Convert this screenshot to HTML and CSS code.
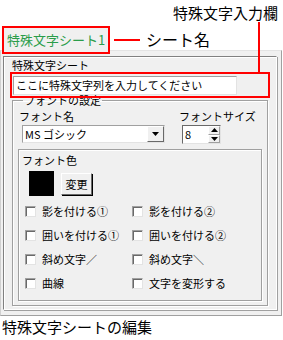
FILE: index.html
```html
<!DOCTYPE html>
<html lang="ja">

<head>
    <meta charset="UTF-8">
    <meta name="viewport" content="width=device-width, initial-scale=1.0">
    <title>特殊文字シートの編集</title>
    <link rel="stylesheet" href="styles.css">
</head>

<body>
    <div class="note-top">特殊文字入力欄</div>

    <div class="tab-row">
        <div class="tab">特殊文字シート1</div>
        <div class="note-line"></div>
        <div class="note-name">シート名</div>
    </div>

    <div class="panel">
        <div class="page">
            <div class="page-title">特殊文字シート</div>

            <div class="text-wrap">
                <div class="note-drop"></div>
                <div class="text-field">ここに特殊文字列を入力してください</div>
            </div>

            <fieldset class="font-group">
                <legend>フォントの設定</legend>

                <div class="font-labels">
                    <span class="lbl-name">フォント名</span>
                    <span>フォントサイズ</span>
                </div>

                <div class="font-controls">
                    <div class="combo">
                        <span class="combo-text">MS ゴシック</span>
                        <span class="combo-btn">
                            <svg width="7" height="4" viewBox="0 0 7 4"><path d="M0 0H7L3.5 4Z" fill="#000"/></svg>
                        </span>
                    </div>
                    <div class="spin">
                        <span class="spin-text">8</span>
                        <span class="spin-btns">
                            <span class="spin-up"><svg width="7" height="4" viewBox="0 0 7 4"><path d="M0 4H7L3.5 0Z" fill="#000"/></svg></span>
                            <span class="spin-down"><svg width="7" height="4" viewBox="0 0 7 4"><path d="M0 0H7L3.5 4Z" fill="#000"/></svg></span>
                        </span>
                    </div>
                </div>

                <div class="color-box">
                    <div class="color-title">フォント色</div>
                    <div class="color-row">
                        <div class="swatch"></div>
                        <div class="btn">変更</div>
                    </div>

                    <div class="checks">
                        <div class="check"><span class="box"></span>影を付ける①</div>
                        <div class="check"><span class="box"></span>影を付ける②</div>
                        <div class="check"><span class="box"></span>囲いを付ける①</div>
                        <div class="check"><span class="box"></span>囲いを付ける②</div>
                        <div class="check"><span class="box"></span>斜め文字／</div>
                        <div class="check"><span class="box"></span>斜め文字＼</div>
                        <div class="check"><span class="box"></span>曲線</div>
                        <div class="check"><span class="box"></span>文字を変形する</div>
                    </div>
                </div>
            </fieldset>
        </div>
    </div>

    <div class="caption">特殊文字シートの編集</div>
</body>

</html>
```

FILE: styles.css
```css
body {
    margin: 0;
    width: 283px;
    background-color: #fff;
    font-family: "Noto Sans CJK JP", sans-serif;
    color: #000;
}

.note-top {
    height: 26px;
    line-height: 26px;
    font-size: 15px;
    text-align: right;
    padding-right: 5px;
    box-sizing: border-box;
}

.tab-row {
    display: flex;
    align-items: flex-start;
    height: 24px;
}

.tab {
    position: relative;
    z-index: 1;
    margin-left: 2px;
    width: 108px;
    height: 28px;
    box-sizing: border-box;
    border: 2px solid #f00;
    background-color: #f0f0f0;
    color: #2a9d4a;
    font-size: 13px;
    line-height: 24px;
    padding-left: 3px;
    white-space: nowrap;
    overflow: hidden;
}

.note-line {
    margin-left: 4px;
    margin-top: 13px;
    width: 26px;
    height: 2px;
    background-color: #f00;
}

.note-name {
    margin-left: 6px;
    margin-top: 3px;
    font-size: 16px;
    line-height: 20px;
}

.panel {
    width: 282px;
    height: 266px;
    box-sizing: border-box;
    background-color: #f0f0f0;
    border-top: 1px solid #e3e3e3;
    border-right: 1px solid #a0a0a0;
    border-bottom: 1px solid #a0a0a0;
    border-left: 1px solid #d0d0d0;
    padding: 5px 4px 5px 2px;
}

.page {
    height: 100%;
    box-sizing: border-box;
    border: 1px solid;
    border-color: #808080 #fff #fff #808080;
    box-shadow: 1px 1px 0 #a0a0a0, inset 1px 1px 0 #fff;
}

.page-title {
    font-size: 11px;
    line-height: 14px;
    padding-left: 8px;
    margin-top: 1px;
}

.text-wrap {
    position: relative;
    z-index: 1;
    margin-left: 6px;
    width: 260px;
    height: 26px;
    box-sizing: border-box;
    border: 2px solid #f00;
    padding: 2px 1px;
}

.note-drop {
    position: absolute;
    left: 246px;
    top: -52px;
    width: 2px;
    height: 50px;
    background-color: #f00;
}

.text-field {
    width: 224px;
    height: 19px;
    box-sizing: border-box;
    background-color: #fff;
    border: 1px solid;
    border-color: #a0a0a0 #e3e3e3 #e3e3e3 #a0a0a0;
    font-size: 11px;
    line-height: 17px;
    padding-left: 2px;
    white-space: nowrap;
}

.font-group {
    margin: -4px 0 0 8px;
    width: 256px;
    height: 212px;
    box-sizing: border-box;
    border: 1px solid #a0a0a0;
    box-shadow: 1px 1px 0 #fff, inset 1px 1px 0 #fff;
    padding: 0 4px 0 6px;
}

.font-group legend {
    font-size: 11px;
    line-height: 12px;
    padding: 0 1px;
    margin-left: 4px;
}

.font-labels {
    display: flex;
    font-size: 11px;
    line-height: 13px;
    margin-top: 4px;
}

.lbl-name {
    width: 160px;
}

.font-controls {
    display: flex;
    align-items: flex-start;
    margin-top: 2px;
}

.combo {
    display: flex;
    margin-left: 3px;
    width: 143px;
    height: 18px;
    box-sizing: border-box;
    background-color: #fff;
    border: 1px solid;
    border-color: #a0a0a0 #e3e3e3 #e3e3e3 #a0a0a0;
}

.combo-text {
    flex: 1;
    font-size: 11px;
    line-height: 16px;
    padding-left: 2px;
}

.combo-btn {
    display: flex;
    align-items: center;
    justify-content: center;
    width: 15px;
    background-color: #f0f0f0;
    border: 1px solid;
    border-color: #fff #696969 #696969 #fff;
}

.spin {
    display: flex;
    margin-left: 17px;
    width: 39px;
    height: 19px;
    box-sizing: border-box;
    background-color: #fff;
    border: 1px solid;
    border-color: #696969 #e3e3e3 #e3e3e3 #696969;
}

.spin-text {
    flex: 1;
    font-size: 11px;
    line-height: 16px;
    padding-left: 2px;
}

.spin-btns {
    display: flex;
    flex-direction: column;
    width: 12px;
}

.spin-up,
.spin-down {
    flex: 1;
    display: flex;
    align-items: center;
    justify-content: center;
    background-color: #f0f0f0;
    border: 1px solid;
    border-color: #fff #a0a0a0 #a0a0a0 #fff;
}

.color-box {
    margin: 5px 0 0 -1px;
    width: 244px;
    height: 152px;
    box-sizing: border-box;
    border: 1px solid #a0a0a0;
    box-shadow: 1px 1px 0 #fff, inset 1px 1px 0 #fff;
    padding: 4px 3px 0 3px;
}

.color-title {
    font-size: 11px;
    line-height: 13px;
}

.color-row {
    display: flex;
    align-items: center;
    gap: 7px;
    margin: 4px 0 0 7px;
}

.swatch {
    width: 25px;
    height: 25px;
    background-color: #000;
}

.btn {
    width: 31px;
    height: 22px;
    box-sizing: border-box;
    border: 1px solid;
    border-color: #fff #696969 #696969 #fff;
    box-shadow: 1px 1px 0 #000;
    font-size: 11px;
    line-height: 20px;
    text-align: center;
}

.checks {
    display: grid;
    grid-template-columns: 107px auto;
    grid-auto-rows: 24px;
    margin: 3px 0 0 3px;
}

.check {
    display: flex;
    align-items: center;
    font-size: 11px;
    white-space: nowrap;
}

.box {
    width: 11px;
    height: 11px;
    box-sizing: border-box;
    margin-right: 6px;
    background-color: #fff;
    border: 1px solid;
    border-color: #a0a0a0 #e3e3e3 #e3e3e3 #a0a0a0;
    box-shadow: inset 1px 1px 0 #696969;
}

.caption {
    margin: 1px 0 0 2px;
    font-size: 15px;
    line-height: 20px;
}
```
